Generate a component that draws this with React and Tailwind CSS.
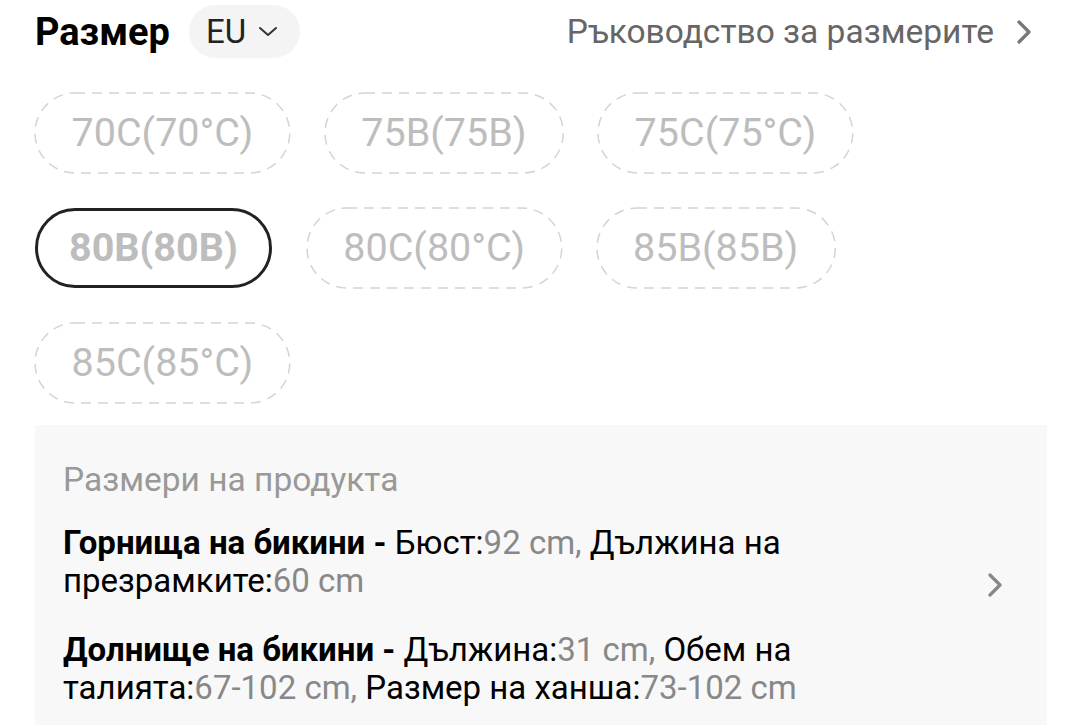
const ROWS = [
  ['70C(70°C)', '75B(75B)', '75C(75°C)'],
  ['80B(80B)', '80C(80°C)', '85B(85B)'],
  ['85C(85°C)'],
]

const SELECTED = '80B(80B)'

function Chevron({ className }) {
  return (
    <svg width="16" height="24" viewBox="0 0 16 24" fill="none" className={className}>
      <polyline points="3,2 13,12 3,22" stroke="currentColor" strokeWidth="3.2" strokeLinecap="round" strokeLinejoin="round" />
    </svg>
  )
}

function SizeChip({ label }) {
  const active = label === SELECTED
  if (active) {
    return (
      <div className="h-[80px] px-[31px] rounded-full border-[3px] border-[#222] flex items-center text-[39.5px] font-bold text-[#bdbdbd]">
        {label}
      </div>
    )
  }
  return (
    <div className="relative h-[80px] px-[36.5px] rounded-full flex items-center text-[39.5px] text-[#bdbdbd]">
      <svg className="absolute inset-0 w-full h-full overflow-visible pointer-events-none" fill="none">
        <rect width="100%" height="100%" rx="40" ry="40" stroke="#d4d4d4" strokeWidth="1.5" strokeDasharray="10 7" />
      </svg>
      {label}
    </div>
  )
}

export default function App() {
  return (
    <div className="w-[1080px] h-[725px] overflow-hidden bg-white font-['Roboto',sans-serif]">
      {/* Header */}
      <div className="flex items-center justify-between pl-[35px] pr-[48px] pt-[5px]">
        <div className="flex items-center gap-[19px]">
          <h1 className="text-[38px] font-bold text-black leading-none">Размер</h1>
          <div className="h-[53px] pl-[17px] pr-[22px] rounded-full bg-[#f4f4f4] flex items-center gap-[12px]">
            <span className="text-[33px] text-[#222] leading-none">EU</span>
            <svg width="20" height="11" viewBox="0 0 20 11" fill="none" className="text-[#333]">
              <polyline points="2,2 10,9 18,2" stroke="currentColor" strokeWidth="2" strokeLinecap="round" strokeLinejoin="round" />
            </svg>
          </div>
        </div>
        <div className="flex items-center gap-[22px] text-[#666]">
          <span className="text-[33.5px] leading-none">Ръководство за размерите</span>
          <Chevron className="text-[#777]" />
        </div>
      </div>

      {/* Size chips */}
      <div className="flex flex-col gap-[35px] pl-[35px] pt-[35px]">
        {ROWS.map((row, i) => (
          <div key={i} className="flex gap-[35px]">
            {row.map((label) => (
              <SizeChip key={label} label={label} />
            ))}
          </div>
        ))}
      </div>

      {/* Product measurements */}
      <div className="ml-[35px] mr-[33px] mt-[22px] bg-[#f8f8f8] pl-[28px] pr-[44px] pt-[36px] pb-[40px] flex items-center justify-between">
        <div>
          <p className="text-[33.5px] text-[#999] leading-[38px]">Размери на продукта</p>
          <p className="mt-[25px] text-[33px] leading-[38px] text-black w-[820px]">
            <span className="font-bold">Горнища на бикини - </span>
            Бюст:<span className="text-[#888]">92 cm,</span> Дължина на презрамките:
            <span className="text-[#888]">60 cm</span>
          </p>
          <p className="mt-[31px] text-[33px] leading-[38px] text-black w-[820px]">
            <span className="font-bold">Долнище на бикини - </span>
            Дължина:<span className="text-[#888]">31 cm,</span> Обем на талията:
            <span className="text-[#888]">67-102 cm,</span> Размер на ханша:
            <span className="text-[#888]">73-102 cm</span>
          </p>
        </div>
        <Chevron className="text-[#888] mt-[2px]" />
      </div>
    </div>
  )
}
